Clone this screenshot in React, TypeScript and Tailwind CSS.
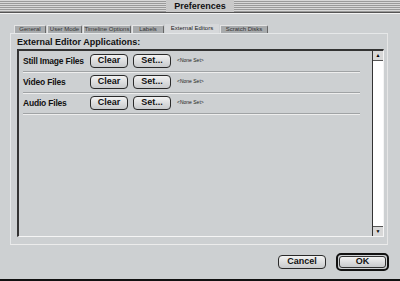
const tabs = [
  { label: "General", w: 32 },
  { label: "User Mode", w: 35 },
  { label: "Timeline Options", w: 48 },
  { label: "Labels", w: 32 },
  { label: "External Editors", w: 54, active: true },
  { label: "Scratch Disks", w: 48 },
];

const rows = ["Still Image Files", "Video Files", "Audio Files"];

function MacButton({ label, w }: { label: string; w: number }) {
  return (
    <div
      className="h-[14px] shrink-0 flex items-center justify-center rounded-[4px] border border-[#2a2a2a] bg-gradient-to-b from-[#f2f2f2] to-[#c8cacc] text-[9px] font-bold text-[#111]"
      style={{ width: w }}
    >
      {label}
    </div>
  );
}

export default function App() {
  return (
    <div className="w-[400px] h-[281px] bg-[#cdd0d2] flex flex-col font-['Liberation_Sans',Arial,sans-serif] border-b-2 border-[#111] overflow-hidden">
      {/* Title bar */}
      <div className="h-[13px] relative flex items-center justify-center bg-[repeating-linear-gradient(to_bottom,#d8d8d8_0px,#d8d8d8_1px,#9a9a9a_1px,#9a9a9a_2px)] border-b border-[#555]">
        <span className="px-2 bg-[#c9c9c9] text-[9px] font-bold leading-[12px] text-[#111]">Preferences</span>
      </div>
      <div className="h-px bg-[#f4f4f4]" />

      <div className="flex-1 flex flex-col pl-[10px] pr-[12px] pt-[10px]">
        {/* Tabs */}
        <div className="flex items-end pl-[4px] h-[9px] gap-px">
          {tabs.map((t) => (
            <div
              key={t.label}
              className={
                t.active
                  ? "h-[9px] flex items-center justify-center text-[6px] text-[#222] bg-[#d6d8da]"
                  : "h-[8px] flex items-center justify-center text-[6px] text-[#333] bg-[#a8abad] border-t border-l border-[#e4e4e4] border-r-[#666] border-r rounded-tr-[2px]"
              }
              style={{ width: t.w }}
            >
              {t.label}
            </div>
          ))}
        </div>

        {/* Group */}
        <div className="flex-1 flex flex-col border-t border-[#e6e8e9] border-l border-b border-r border-b-[#ececec] border-r-[#e6e6e6] mb-[8px] pl-[6px] pr-[3px] pt-[3px] pb-[7px]">
          <div className="text-[9px] font-bold leading-[11px] text-[#111] mb-[1px]">External Editor Applications:</div>
          <div className="flex-1 flex border-t-2 border-l-2 border-[#333] border-b border-r border-b-[#f5f5f5] border-r-[#f5f5f5]">
            <div className="flex-1 flex flex-col pl-[4px] pr-[12px]">
              {rows.map((r) => (
                <div key={r} className="h-[21px] flex items-center border-b border-[#a0a3a5] shadow-[0_1px_0_#eeeeee]">
                  <span className="w-[67px] shrink-0 whitespace-nowrap text-[8.5px] tracking-[-0.2px] font-bold text-[#111]">{r}</span>
                  <MacButton label="Clear" w={38} />
                  <div className="w-[5px] shrink-0" />
                  <MacButton label="Set..." w={38} />
                  <span className="ml-[6px] whitespace-nowrap text-[5px] text-[#222]">&lt;None Set&gt;</span>
                </div>
              ))}
            </div>
            {/* Scrollbar */}
            <div className="w-[11px] flex flex-col bg-white border-l border-[#333]">
              <div className="h-[10px] flex items-center justify-center bg-[#d8d8d8] border-b border-[#555] text-[5px]">▲</div>
              <div className="flex-1" />
              <div className="h-[10px] flex items-center justify-center bg-[#d8d8d8] border-t border-[#555] text-[5px]">▼</div>
            </div>
          </div>
        </div>

        {/* Bottom buttons */}
        <div className="flex justify-end items-center gap-[10px] pb-[8px] -mr-[1px]">
          <MacButton label="Cancel" w={48} />
          <div className="w-[53px] h-[18px] rounded-[5px] border-2 border-[#111] flex items-center justify-center p-px">
            <div className="w-full h-full rounded-[3px] border border-[#333] bg-gradient-to-b from-[#f2f2f2] to-[#c8cacc] flex items-center justify-center text-[9px] font-bold text-[#111]">
              OK
            </div>
          </div>
        </div>
      </div>
    </div>
  );
}
